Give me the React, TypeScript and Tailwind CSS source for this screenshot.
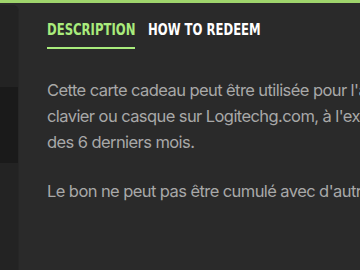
import React from "react";

const tabs = [
    { label: "DESCRIPTION", width: "w-[88px]", active: true },
    { label: "HOW TO REDEEM", width: "w-[114px]", active: false },
];

export default function App() {
    return (
        <div className="w-[360px] h-[270px] overflow-hidden bg-[#2a2a2a] flex flex-col">
            <div className="h-[3px] bg-[#9fd46c] shrink-0" />
            <div className="flex flex-1 min-h-0">
                <div className="w-[19px] shrink-0 bg-[#232323] rounded-tr-md mt-[2px] flex flex-col border-r border-[#262626]">
                    <div className="h-[82px]" />
                    <div className="h-[76px] bg-[#1a1a1a]" />
                </div>
                <div className="flex-1 min-w-0 pl-[28px] pt-[17px] overflow-hidden">
                    <div className="flex gap-[13px] font-['DejaVu_Sans_Condensed',sans-serif] font-bold text-[16px] leading-[19px]">
                        {tabs.map((tab) => (
                            <div
                                key={tab.label}
                                className={`${tab.width} pb-[8px] whitespace-nowrap ${tab.active ? "text-[#a9ec7c] border-b-2 border-[#a9ec7c]" : "text-white"}`}
                            >
                                <span className="inline-block origin-left scale-x-[0.81]">{tab.label}</span>
                            </div>
                        ))}
                    </div>
                    <div className="mt-[28px] w-[360px] font-['Inter',sans-serif] text-[16.5px] leading-[26px] tracking-[-0.035em] text-[#a8a8a8] whitespace-nowrap">
                        <p>Cette carte cadeau peut être utilisée pour l'achat</p>
                        <p>clavier ou casque sur Logitechg.com, à l'exception</p>
                        <p>des 6 derniers mois.</p>
                        <p className="mt-[23px]">Le bon ne peut pas être cumulé avec d'autres</p>
                    </div>
                </div>
            </div>
        </div>
    );
}
